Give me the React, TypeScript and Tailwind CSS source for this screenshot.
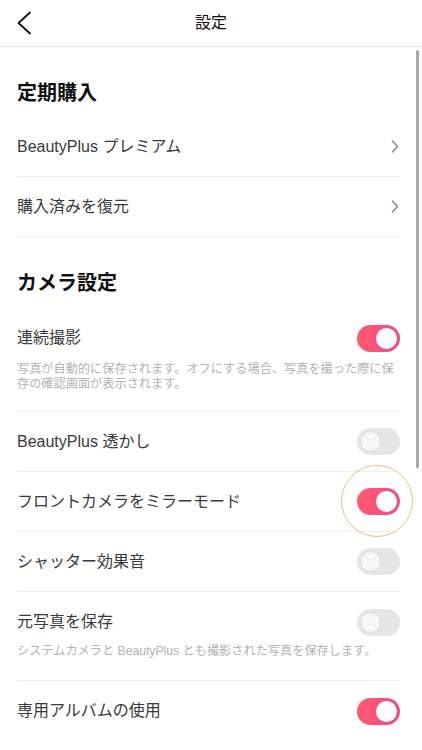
import React from 'react';

const FONT = { fontFamily: '"Liberation Sans", "Noto Sans CJK JP", sans-serif' };

const Toggle: React.FC<{ on: boolean }> = ({ on }) =>
  on ? (
    <div className="w-[43px] h-[27px] rounded-full bg-gradient-to-r from-[#ff5a6c] to-[#f4488e] flex items-center justify-end pr-[3px]">
      <div className="w-[21px] h-[21px] rounded-full bg-white" />
    </div>
  ) : (
    <div className="w-[43px] h-[27px] rounded-full bg-[#e6e6e6] flex items-center pl-[3px]">
      <div className="w-[21px] h-[21px] rounded-full bg-[#f7f7f7] border border-[#dcdcdc]" />
    </div>
  );

const Chevron = () => (
  <svg width="8" height="13" viewBox="0 0 8 13" fill="none">
    <polyline points="1.5,1 6.5,6.5 1.5,12" stroke="#8a8a8a" strokeWidth="1.5" strokeLinecap="round" strokeLinejoin="round" />
  </svg>
);

const SectionTitle: React.FC<{ title: string }> = ({ title }) => (
  <div className="pt-[34px] pb-[12px]">
    <h2 className="text-[20px] leading-[24px] font-bold text-[#111]">{title}</h2>
  </div>
);

const LinkRow: React.FC<{ label: string }> = ({ label }) => (
  <div className="h-[60px] flex items-center justify-between border-b border-[#efefef] pr-[1px]">
    <span className="text-[16px] text-[#3a3a3a]">{label}</span>
    <Chevron />
  </div>
);

interface ToggleRowProps {
  label: string;
  on: boolean;
  highlight?: boolean;
  last?: boolean;
}

const ToggleRow: React.FC<ToggleRowProps> = ({ label, on, highlight, last }) => (
  <div className={`h-[60px] flex items-center justify-between ${last ? '' : 'border-b border-[#efefef]'}`}>
    <span className="text-[16px] text-[#3a3a3a]">{label}</span>
    <div className="relative">
      {highlight && (
        <div className="absolute left-[-16px] top-[-23px] w-[72px] h-[72px] rounded-full border-[1.5px] border-[#e9c56d]" />
      )}
      <Toggle on={on} />
    </div>
  </div>
);

export default function App() {
  return (
    <div className="relative w-[422px] h-[750px] bg-white overflow-hidden" style={FONT}>
      {/* header */}
      <div className="h-[47px] flex items-center border-b border-[#e8e8e8] relative">
        <svg className="ml-[16px]" width="16" height="24" viewBox="0 0 16 24" fill="none">
          <polyline points="14,1.5 2.5,12 14,22.5" stroke="#111" strokeWidth="1.8" strokeLinecap="round" strokeLinejoin="round" />
        </svg>
        <span className="absolute left-0 right-0 text-center text-[16px] text-[#111] pointer-events-none">設定</span>
      </div>

      <div className="pl-[17px] pr-[22px]">
        <SectionTitle title="定期購入" />
        <LinkRow label="BeautyPlus プレミアム" />
        <LinkRow label="購入済みを復元" />

        <SectionTitle title="カメラ設定" />
        <div className="pt-[18px] pb-[19px] border-b border-[#efefef]">
          <div className="flex items-center justify-between h-[26px]">
            <span className="text-[16px] text-[#3a3a3a]">連続撮影</span>
            <Toggle on />
          </div>
          <p className="mt-[11px] text-[12.2px] leading-[15px] text-[#b3b3b3]">
            写真が自動的に保存されます。オフにする場合、写真を撮った際に保存の確認画面が表示されます。
          </p>
        </div>
        <ToggleRow label="BeautyPlus 透かし" on={false} />
        <ToggleRow label="フロントカメラをミラーモード" on highlight />
        <ToggleRow label="シャッター効果音" on={false} />
        <div className="pt-[17px] pb-[21px] border-b border-[#efefef]">
          <div className="flex items-center justify-between h-[26px]">
            <span className="text-[16px] text-[#3a3a3a]">元写真を保存</span>
            <Toggle on={false} />
          </div>
          <p className="mt-[9px] text-[12.2px] leading-[15px] text-[#b3b3b3]">
            システムカメラと BeautyPlus とも撮影された写真を保存します。
          </p>
        </div>
        <ToggleRow label="専用アルバムの使用" on last />
      </div>

      {/* scrollbar */}
      <div className="absolute left-[416px] top-[50px] w-[3px] h-[418px] rounded-full bg-[#a8a8a8]" />
    </div>
  );
}
